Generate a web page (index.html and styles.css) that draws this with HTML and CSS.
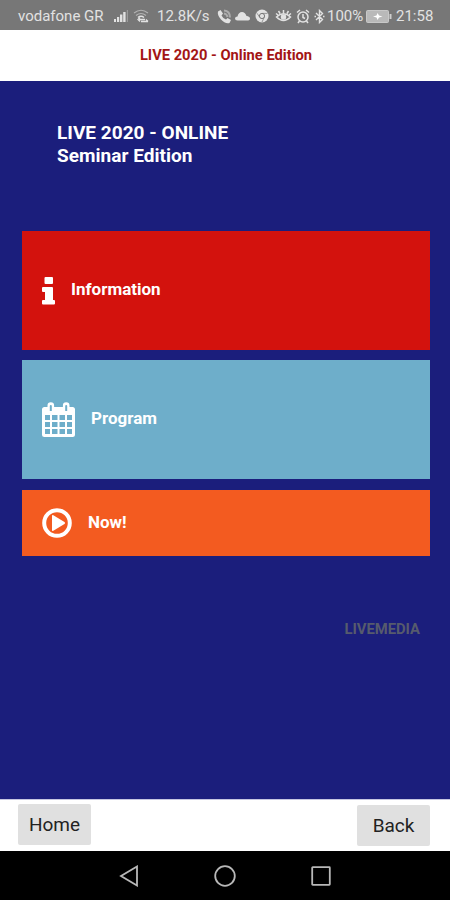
FILE: index.html
```html
<!DOCTYPE html>
<html lang="en">
<head>
    <meta charset="UTF-8">
    <meta name="viewport" content="width=device-width, initial-scale=1.0">
    <title>LIVE 2020 - Online Edition</title>
    <link rel="stylesheet" href="styles.css">
</head>
<body>
    <div class="status-bar">
        <span class="carrier">vodafone GR</span>
        <svg class="signal" width="15" height="14" viewBox="0 0 15 14" fill="currentColor">
            <path d="M0 10h2v3H0zM3 8h2.200v5H3zM6 5.500h2.400V13H6zM9.200 3h2.400v10H9.200z"/>
            <path d="M12.800 1H14v12h-1.200z" opacity=".35"/>
        </svg>
        <svg class="wifi" width="17" height="14" viewBox="0 0 17 14" fill="none" stroke="currentColor">
            <path d="M1 4Q8 -1.500 15 4M3 6.500Q8 2.500 13 6.500" stroke-width="1.200" opacity=".55"/>
            <path d="M5 8.500Q8 6 11 8.500" stroke-width="1.500"/>
            <path d="M6 10.500h6M7 8.500l-2 2 2 2M8 12.500h7M13 10.500l2 2" stroke-width="1.300"/>
        </svg>
        <span class="speed">12.8K/s</span>
        <svg class="phone" width="15" height="15" viewBox="0 0 15 15">
            <path d="M1 2.500 3.500 1 6 4.500 4.500 6.500Q6 9.500 9 10.500l1.500-1.500 3.500 2-1.500 3Q8 15 4 10.500 0 6 1 2.500z" fill="currentColor"/>
            <path d="M7 1.500Q13 2 13 8.500M7 4.500Q10 5 10.500 8" fill="none" stroke="currentColor" stroke-width="2" opacity=".5"/>
        </svg>
        <svg class="cloud" width="15" height="12" viewBox="0 0 15 12" fill="currentColor">
            <path d="M2.500 10.500Q0 10.500 0 8.500T2.500 6.500Q3.500 2 7 2q3 0 4.500 4Q15 6.500 15 8.500t-3 2z"/>
        </svg>
        <svg class="chrome" width="14" height="14" viewBox="0 0 14 14">
            <circle cx="7" cy="7" r="6.500" fill="currentColor"/>
            <circle cx="7" cy="7" r="2.600" fill="none" stroke="#777" stroke-width="1"/>
            <path d="M7 4.400h5.500M4.700 8.300 2 4.200M9.300 8.300 7 13" stroke="#777" stroke-width=".7"/>
        </svg>
        <svg class="eye" width="17" height="14" viewBox="0 0 17 14" fill="none" stroke="currentColor" stroke-width="1.500">
            <path d="M1.500 8Q8.500 1.500 15.500 8 8.500 15 1.500 8zM8.500 1v3M3.500 2l1.500 2.500M13.500 2 12 4.500M1 4.500 3 6M16 4.500 14 6"/>
            <circle cx="8.500" cy="8" r="2" fill="currentColor"/>
        </svg>
        <svg class="alarm" width="14" height="15" viewBox="0 0 14 15" fill="none" stroke="currentColor" stroke-width="1.500">
            <circle cx="7" cy="8" r="5"/>
            <path d="M1 3.500 4 1M13 3.500 10 1M7 5v3.500l2 1M3.500 12l-1.500 2M10.500 12l1.500 2"/>
        </svg>
        <svg class="bluetooth" width="11" height="15" viewBox="0 0 11 15" fill="none" stroke="currentColor" stroke-width="1.400">
            <path d="M2 4l6.500 6.500L5.500 13.500v-12l3 3L2 11M.5 7.500h1.500M9 7.500h1.500"/>
        </svg>
        <span class="percent">100%</span>
        <svg class="battery" width="26" height="13" viewBox="0 0 26 13">
            <rect x=".5" y=".5" width="22" height="12" rx="1" fill="#b9b9b9" stroke="#c8c8c8"/>
            <path d="M23.500 4h2v5h-2z" fill="#cfcfcf"/>
            <path d="M7 6.500 10.500 5.500 11.500 3 13 5.500 16.500 6.500 13 7.500 11.500 10 10.500 7.500z" fill="#fff"/>
        </svg>
        <span class="clock">21:58</span>
    </div>

    <header>LIVE 2020 - Online Edition</header>

    <main>
        <h1>LIVE 2020 - ONLINE<br>Seminar Edition</h1>
        <div class="menu">
            <a class="tile information">
                <svg width="13" height="28" viewBox="0 0 13 28" fill="currentColor">
                    <rect x="2.500" y="0" width="8.500" height="7" rx="1"/>
                    <path d="M1 10h9q1 0 1 1v12h1q1 0 1 1v2.500q0 1-1 1H1q-1 0-1-1V24q0-1 1-1h2v-8H1q-1 0-1-1v-3q0-1 1-1z"/>
                </svg>
                <span>Information</span>
            </a>
            <a class="tile program">
                <svg width="33" height="35" viewBox="0 0 33 35">
                    <path fill="currentColor" fill-rule="evenodd" d="M2.500 5H5.500V3.500a3.300 3.300 0 0 1 6.600 0V5h8.800V3.500a3.300 3.300 0 0 1 6.600 0V5h3Q33 5 33 7.500v25q0 2.500-2.500 2.500h-28Q0 35 0 32.500v-25Q0 5 2.500 5z
                        M7.800 4v5h2V4a1 1 0 0 0-2 0z M23.200 4v5h2V4a1 1 0 0 0-2 0z
                        M3 13v5h5v-5z M10 13v5h5.500v-5z M17.500 13v5H23v-5z M25 13v5h5v-5z
                        M3 20v5h5v-5z M10 20v5h5.500v-5z M17.500 20v5H23v-5z M25 20v5h5v-5z
                        M3 27v5h5v-5z M10 27v5h5.500v-5z M17.500 27v5H23v-5z M25 27v5h5v-5z"/>
                </svg>
                <span>Program</span>
            </a>
            <a class="tile now">
                <svg width="30" height="30" viewBox="0 0 30 30">
                    <circle cx="15" cy="15" r="12.800" fill="none" stroke="currentColor" stroke-width="4"/>
                    <path d="M10 8q0-1.500 1.300-.8L22.500 14q1.300 1 0 2l-11.200 6.800q-1.300.7-1.300-.8z" fill="currentColor"/>
                </svg>
                <span>Now!</span>
            </a>
        </div>
        <div class="brand">LIVEMEDIA</div>
    </main>

    <footer>
        <button class="home">Home</button>
        <button class="back">Back</button>
    </footer>

    <nav>
        <svg width="20" height="22" viewBox="0 0 20 22"><path d="M18 1.500v19L2 11z"/></svg>
        <svg width="22" height="22" viewBox="0 0 22 22"><circle cx="11" cy="11" r="9.800"/></svg>
        <svg width="20" height="20" viewBox="0 0 20 20"><rect x="1.200" y="1.200" width="17.600" height="17.600" rx=".5"/></svg>
    </nav>
</body>
</html>
```
FILE: styles.css
```css
* {
    box-sizing: border-box;
}
body {
    font-family: Roboto, sans-serif;
    margin: 0;
    height: 900px;
    display: flex;
    flex-direction: column;
    background-color: #fff;
    overflow: hidden;
}
svg {
    display: block;
    flex: none;
}

/* phone status bar */
.status-bar {
    height: 30px;
    padding: 2px 0 0 18px;
    display: flex;
    align-items: center;
    background-color: #777;
    color: #e2e2e2;
    font-size: 15px;
    white-space: nowrap;
}
.status-bar span {
    flex: none;
}
.carrier {
    width: 96px;
}
.signal {
    margin-right: 4px;
}
.wifi {
    margin-right: 7px;
}
.speed {
    width: 60px;
}
.phone {
    margin-right: 3px;
}
.cloud {
    margin-right: 5px;
}
.chrome {
    margin-right: 6px;
}
.eye {
    margin-right: 4px;
}
.alarm {
    margin-right: 4px;
}
.bluetooth {
    margin-right: 2px;
}
.percent {
    width: 39px;
}
.battery {
    margin-right: 4px;
}

header {
    height: 51px;
    line-height: 51px;
    padding-left: 2px;
    text-align: center;
    color: #a31515;
    font-size: 14.7px;
    font-weight: bold;
}

main {
    height: 718px;
    padding: 41px 20px 0 22px;
    background-color: #1b1e7c;
    color: #fff;
}
h1 {
    margin: 0 0 64px 35px;
    font-size: 19px;
    line-height: 22.5px;
    letter-spacing: 0.03px;
    font-weight: bold;
}
.menu {
    display: flex;
    flex-direction: column;
    gap: 11px;
}
.tile {
    height: 119px;
    padding-left: 20px;
    display: flex;
    align-items: center;
    gap: 16px;
    font-size: 17px;
    font-weight: bold;
}
.tile span {
    position: relative;
    top: -2px;
}
.information {
    background-color: #d3120d;
}
.program {
    background-color: #6eaeca;
    margin-top: -1px;
}
.now {
    height: 66px;
    background-color: #f35b20;
}
.now span {
    top: -1px;
}
.brand {
    margin: 64px 10px 0 0;
    text-align: right;
    color: #565b6d;
    font-size: 14.8px;
    line-height: 18px;
    font-weight: bold;
}

footer {
    height: 52px;
    padding: 4px 20px 0 18px;
    display: flex;
    justify-content: space-between;
    align-items: flex-start;
    border-top: 1px solid #c5c6e0;
}
button {
    width: 73px;
    height: 41px;
    padding: 0 0 1px;
    border: none;
    border-radius: 2px;
    background-color: #e0e0e0;
    color: #222;
    font-family: Roboto, sans-serif;
    font-size: 19px;
}
.back {
    margin-top: 1px;
}

/* android navigation keys */
nav {
    height: 49px;
    padding-left: 119px;
    display: flex;
    align-items: center;
    gap: 75px;
    background-color: #000;
}
nav svg {
    fill: none;
    stroke: #b8b8b8;
    stroke-width: 1.8;
}
```
